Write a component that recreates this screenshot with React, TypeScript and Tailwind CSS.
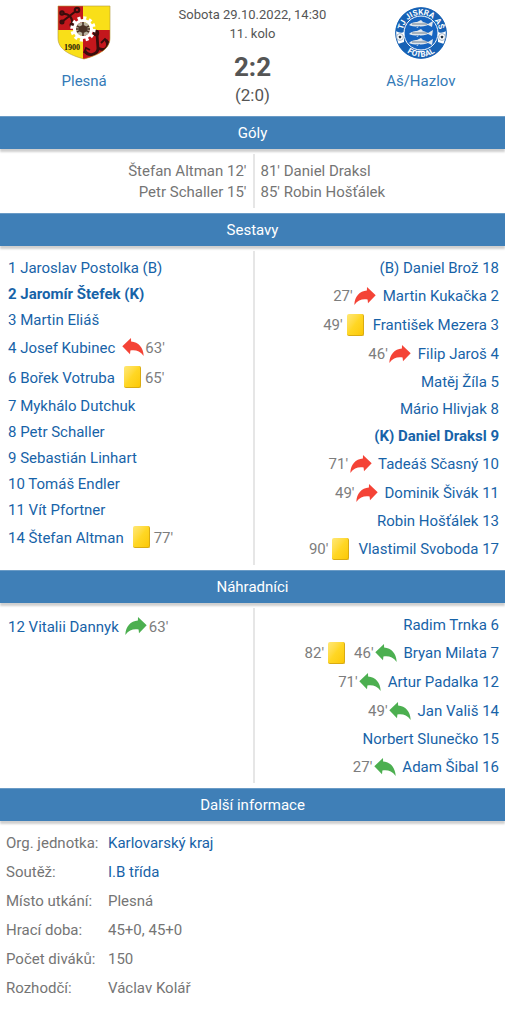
import React from 'react';

type EventType = 'out-left' | 'out-right' | 'in-left' | 'in-right' | 'yellow';

interface MatchEvent {
  type: EventType;
  minute: number;
}

interface Player {
  number: number;
  name: string;
  role?: string;
  captain?: boolean;
  events?: MatchEvent[];
}

const homePlayers: Player[] = [
  { number: 1, name: 'Jaroslav Postolka', role: 'B' },
  { number: 2, name: 'Jaromír Štefek', role: 'K', captain: true },
  { number: 3, name: 'Martin Eliáš' },
  { number: 4, name: 'Josef Kubinec', events: [{ type: 'out-left', minute: 63 }] },
  { number: 6, name: 'Bořek Votruba', events: [{ type: 'yellow', minute: 65 }] },
  { number: 7, name: 'Mykhálo Dutchuk' },
  { number: 8, name: 'Petr Schaller' },
  { number: 9, name: 'Sebastián Linhart' },
  { number: 10, name: 'Tomáš Endler' },
  { number: 11, name: 'Vít Pfortner' },
  { number: 14, name: 'Štefan Altman', events: [{ type: 'yellow', minute: 77 }] },
];

const awayPlayers: Player[] = [
  { number: 18, name: 'Daniel Brož', role: 'B' },
  { number: 2, name: 'Martin Kukačka', events: [{ type: 'out-right', minute: 27 }] },
  { number: 3, name: 'František Mezera', events: [{ type: 'yellow', minute: 49 }] },
  { number: 4, name: 'Filip Jaroš', events: [{ type: 'out-right', minute: 46 }] },
  { number: 5, name: 'Matěj Žíla' },
  { number: 8, name: 'Mário Hlivjak' },
  { number: 9, name: 'Daniel Draksl', role: 'K', captain: true },
  { number: 10, name: 'Tadeáš Sčasný', events: [{ type: 'out-right', minute: 71 }] },
  { number: 11, name: 'Dominik Šivák', events: [{ type: 'out-right', minute: 49 }] },
  { number: 13, name: 'Robin Hošťálek' },
  { number: 17, name: 'Vlastimil Svoboda', events: [{ type: 'yellow', minute: 90 }] },
];

const homeSubs: Player[] = [
  { number: 12, name: 'Vitalii Dannyk', events: [{ type: 'in-right', minute: 63 }] },
];

const awaySubs: Player[] = [
  { number: 6, name: 'Radim Trnka' },
  {
    number: 7,
    name: 'Bryan Milata',
    events: [
      { type: 'yellow', minute: 82 },
      { type: 'in-left', minute: 46 },
    ],
  },
  { number: 12, name: 'Artur Padalka', events: [{ type: 'in-left', minute: 71 }] },
  { number: 14, name: 'Jan Vališ', events: [{ type: 'in-left', minute: 49 }] },
  { number: 15, name: 'Norbert Slunečko' },
  { number: 16, name: 'Adam Šibal', events: [{ type: 'in-left', minute: 27 }] },
];

const info = [
  { label: 'Org. jednotka:', value: 'Karlovarský kraj', link: true },
  { label: 'Soutěž:', value: 'I.B třída', link: true },
  { label: 'Místo utkání:', value: 'Plesná' },
  { label: 'Hrací doba:', value: '45+0, 45+0' },
  { label: 'Počet diváků:', value: '150' },
  { label: 'Rozhodčí:', value: 'Václav Kolář' },
];

const ARROW_RIGHT = 'M13 0 L21.7 8.2 L14 16.2 L13.6 12.6 C8.5 11.8 4 13 0.3 18 C0.8 9.5 5.5 4 12.9 3.6 Z';
const ARROW_LEFT = 'M9 0 L0.3 8.2 L8 16.2 L8.4 12.6 C13.5 11.8 18 13 21.7 18 C21.2 9.5 16.5 4 9.1 3.6 Z';

const EventIcon: React.FC<{ type: EventType }> = ({ type }) => {
  if (type === 'yellow') {
    return (
      <span className="flex w-[25px] justify-center pb-[2px]">
        <span className="h-[22px] w-[17px] rounded-[2px] border-r border-b border-[#d9ab12] bg-linear-to-br from-[#ffe873] via-[#ffd724] to-[#fcc800]" />
      </span>
    );
  }
  const color = type.startsWith('out') ? '#f44336' : '#4caf50';
  return (
    <span className="flex w-[25px] justify-center pb-[2px]">
      <svg width="22" height="18" viewBox="0 0 22 18">
        <path d={type.endsWith('left') ? ARROW_LEFT : ARROW_RIGHT} fill={color} />
      </svg>
    </span>
  );
};

const HomeRow: React.FC<{ player: Player }> = ({ player }) => {
  const { number, name, role, captain, events = [] } = player;
  return (
    <li className={`flex items-center gap-[5px] whitespace-nowrap ${events.length ? 'h-[30px]' : 'h-[26px]'}`}>
      <a href="#" className={`text-[#1763a8] ${captain ? 'font-bold' : ''}`}>
        {`${number} ${name}${role ? ` (${role})` : ''}`}
      </a>
      {events.map((event) => (
        <span key={event.type} className="flex items-center text-[#7d7d7d]">
          <EventIcon type={event.type} />
          <span>{event.minute}'</span>
        </span>
      ))}
    </li>
  );
};

const AwayRow: React.FC<{ player: Player }> = ({ player }) => {
  const { number, name, role, captain, events = [] } = player;
  return (
    <li
      className={`flex items-center justify-end gap-[5px] whitespace-nowrap ${events.length ? 'h-[29px]' : 'h-[27px]'}`}
    >
      {events.map((event) => (
        <span key={event.type} className="flex items-center text-[#7d7d7d]">
          <span>{event.minute}'</span>
          <EventIcon type={event.type} />
        </span>
      ))}
      <a href="#" className={`text-[#1763a8] ${captain ? 'font-bold' : ''}`}>
        {`${role ? `(${role}) ` : ''}${name} ${number}`}
      </a>
    </li>
  );
};

const SectionTitle: React.FC<{ children: React.ReactNode }> = ({ children }) => (
  <h2 className="h-[33px] border-t border-[#6a9bc6] bg-[#3f7fb7] text-center leading-8 text-white shadow-[0_3px_2px_#cfcfcf]">
    {children}
  </h2>
);

const Lineup: React.FC<{ home: Player[]; away: Player[] }> = ({ home, away }) => (
  <div className="my-[5px] grid grid-cols-2">
    <ul className="pt-1 pl-2">
      {home.map((player) => (
        <HomeRow key={player.number} player={player} />
      ))}
    </ul>
    <ul className="border-l-2 border-[#e6e6e6] pt-1 pr-[6px] pb-px">
      {away.map((player) => (
        <AwayRow key={player.number} player={player} />
      ))}
    </ul>
  </div>
);

const PlesnaCrest = () => (
  <svg width="54" height="55" viewBox="0 0 54 55" className="mx-auto">
    <defs>
      <clipPath id="shield">
        <path d="M1 1 H53 V33 C53 44 42 50 27 54 C12 50 1 44 1 33 Z" />
      </clipPath>
    </defs>
    <g clipPath="url(#shield)">
      <rect width="54" height="55" fill="#f9df18" />
      <rect width="26" height="25" fill="#c4171c" />
      <rect x="26" y="25" width="28" height="30" fill="#c4171c" />
      <g fill="none" stroke="#3a0d0c" strokeWidth="2.2">
        <path d="M6 16 L19 6 M6 9 C11 8 16 12 15 19" />
        <circle cx="5" cy="17" r="1.4" />
        <circle cx="20" cy="5" r="2.2" />
        <circle cx="5" cy="8" r="1.6" />
        <circle cx="15" cy="20" r="1.4" />
      </g>
      <g fill="none" stroke="#3a0d0c" strokeWidth="2.8">
        <path d="M40 29 L41 44 M28 46 C31 52 41 50 41 43 C48 47 53 42 49 35" />
        <path d="M27 48 L29 43 L33 45 M44 38 L48 34 L52 38" strokeWidth="1.8" />
        <circle cx="39" cy="28" r="1.8" />
      </g>
    </g>
    <circle cx="26" cy="24" r="8.5" fill="none" stroke="#fff" strokeWidth="3.2" />
    <circle cx="26" cy="24" r="11" fill="none" stroke="#fff" strokeWidth="3.4" strokeDasharray="3 2.76" />
    <circle cx="26" cy="24" r="7" fill="#b9b3a0" />
    <path d="M20 21 L32 27 M20 27 L32 21 M26 17 V31 M19 24 H33" stroke="#4a3326" strokeWidth="1.6" />
    <circle cx="26" cy="24" r="3.8" fill="#4a3326" />
    <text x="7" y="45" fontSize="8" fontWeight="700" fill="#1c1405" className="font-['Liberation_Serif',serif]">
      1900
    </text>
    <path d="M1 1 H53 V33 C53 44 42 50 27 54 C12 50 1 44 1 33 Z" fill="none" stroke="#b39a3a" strokeWidth="0.6" />
  </svg>
);

const HazlovCrest = () => (
  <svg width="54" height="55" viewBox="0 0 54 55" className="mx-auto">
    <defs>
      <path id="arc-top" d="M9 32 A18.4 18.4 0 1 1 45 32" />
      <path id="arc-bottom" d="M3.2 28 A23.8 23.8 0 0 0 50.8 28" />
    </defs>
    <circle cx="27" cy="28" r="25.5" fill="#1762b5" />
    <path
      d="M2 26 C5 28 8 28 10 27 V37 C8 38 6 38 4 39 A25.5 25.5 0 0 1 2 26 M52 26 C49 28 46 28 44 27 V37 C46 38 48 38 50 39 A25.5 25.5 0 0 0 52 26"
      fill="#fff"
    />
    <circle cx="27" cy="28" r="25.3" fill="none" stroke="#1762b5" strokeWidth="1" />
    <circle cx="27" cy="28" r="17" fill="#1664c0" stroke="#fff" strokeWidth="1" />
    {[6, 48].map((cx) => (
      <g key={cx}>
        <circle cx={cx} cy="32" r="3.4" fill="#fff" stroke="#7f97b0" strokeWidth="0.7" />
        <path d={`M${cx} 30.4 l1.5 1.1 l-0.6 1.8 h-1.8 l-0.6 -1.8 Z`} fill="#234" />
      </g>
    ))}
    {[19, 28, 37].map((y) => (
      <g key={y}>
        <path
          d={`M15 ${y + 1} C19 ${y - 3} 29 ${y - 3} 34 ${y} L39 ${y - 3} L38 ${y + 3} L34 ${y + 1} C29 ${y + 3} 19 ${y + 3} 15 ${y + 1} Z M23 ${y - 2} l4 -2 l2 2 Z M22 ${y + 2} l1 2 l3 -2 Z`}
          fill="#dfe6ec"
        />
        <path d={`M18 ${y} H33`} stroke="#6d7f90" strokeWidth="1" />
      </g>
    ))}
    <g fill="#fff" fontWeight="700" textAnchor="middle">
      <text fontSize="8">
        <textPath href="#arc-top" startOffset="50%">
          TJ JISKRA AŠ
        </textPath>
      </text>
      <text fontSize="8">
        <textPath href="#arc-bottom" startOffset="50%">
          FOTBAL
        </textPath>
      </text>
    </g>
  </svg>
);

export default function App() {
  return (
    <main className="min-h-screen bg-white pb-[5px] font-[Roboto,sans-serif] text-[15px] leading-[21px] text-[#757575]">
      <header className="grid h-[116px] grid-cols-3 pt-[5px] text-center">
        <div>
          <PlesnaCrest />
          <a href="#" className="mt-[11px] block text-[#337ab7]">
            Plesná
          </a>
        </div>
        <div className="text-[#555]">
          <p className="text-[13px] leading-5 whitespace-nowrap">Sobota 29.10.2022, 14:30</p>
          <p className="text-[13px] leading-[18px]">11. kolo</p>
          <p className="mt-1 text-[26px] leading-10 font-bold">2:2</p>
          <p className="text-[17px] leading-4">(2:0)</p>
        </div>
        <div>
          <HazlovCrest />
          <a href="#" className="mt-[11px] block text-[#337ab7]">
            Aš/Hazlov
          </a>
        </div>
      </header>

      <section>
        <SectionTitle>Góly</SectionTitle>
        <div className="my-[5px] grid grid-cols-2">
          <ul className="pt-[7px] pr-[6px] pb-[5px] text-right">
            <li>Štefan Altman 12'</li>
            <li>Petr Schaller 15'</li>
          </ul>
          <ul className="border-l-2 border-[#e6e6e6] pt-[7px] pb-[5px] pl-[6px]">
            <li>81' Daniel Draksl</li>
            <li>85' Robin Hošťálek</li>
          </ul>
        </div>
      </section>

      <section>
        <SectionTitle>Sestavy</SectionTitle>
        <Lineup home={homePlayers} away={awayPlayers} />
      </section>

      <section>
        <SectionTitle>Náhradníci</SectionTitle>
        <Lineup home={homeSubs} away={awaySubs} />
      </section>

      <section>
        <SectionTitle>Další informace</SectionTitle>
        <table className="mt-2 ml-[6px] text-left">
          <tbody>
            {info.map(({ label, value, link }) => (
              <tr key={label} className="h-[29px]">
                <th scope="row" className="w-[102px] font-normal whitespace-nowrap">
                  {label}
                </th>
                <td>{link ? <a href="#" className="text-[#1763a8]">{value}</a> : value}</td>
              </tr>
            ))}
          </tbody>
        </table>
      </section>
    </main>
  );
}
